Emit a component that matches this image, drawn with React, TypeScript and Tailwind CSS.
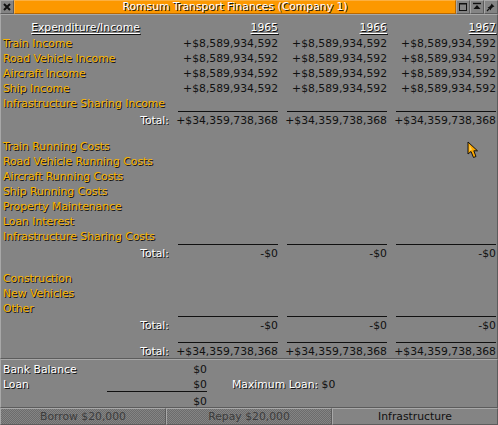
import React from 'react';

const COLS = 'grid grid-cols-[167px_100px_100px_100px] gap-x-[9px]';
const LABEL = 'text-[#f8b400] [text-shadow:1px_1px_0_#101010]';
const WHITE = 'text-white [text-shadow:1px_1px_0_#101010]';
const NUM = 'flex justify-end text-[#101010]';
const BEVEL = 'border border-t-[#a8a8a8] border-l-[#a8a8a8] border-r-[#5c5c5c] border-b-[#5c5c5c]';

const BIG = '+$8,589,934,592';
const SUM = '+$34,359,738,368';

interface IRowProps {
  label?: string;
  values?: string[];
  total?: boolean;
  className?: string;
}

const Row: React.FC<IRowProps> = ({ label = '', values, total = false, className = 'h-[15px]' }) => (
  <div className={`${COLS} leading-[15px] whitespace-nowrap ${className}`}>
    {total ? <span className={`text-right ${WHITE}`}>Total:</span> : <span className={`pl-px ${LABEL}`}>{label}</span>}
    {[0, 1, 2].map((i) => (
      <span key={i} className={NUM}>
        {values ? values[i] : ''}
      </span>
    ))}
  </div>
);

const Rule: React.FC = () => (
  <div className={`${COLS} h-[2px]`}>
    <div />
    <div className="h-px bg-[#101010]" />
    <div className="h-px bg-[#101010]" />
    <div className="h-px bg-[#101010]" />
  </div>
);

const TitleButton: React.FC<{ children: React.ReactNode }> = ({ children }) => (
  <div className={`w-[14px] h-[14px] flex items-center justify-center ${BEVEL}`}>{children}</div>
);

const Cursor: React.FC = () => (
  <svg className="absolute left-[467px] top-[141px]" width="14" height="19" viewBox="0 0 14 19">
    <polygon
      points="1,1 1,13 4,10.5 6.5,16.5 9,15.5 6.8,9.8 10.5,9.8"
      fill="#fca800"
      stroke="#101010"
      strokeWidth="1"
      strokeLinejoin="miter"
    />
    <polygon points="2.5,4 2.5,10 5,8.5" fill="#fcd060" />
  </svg>
);

const DISABLED =
  'w-[166px] text-center text-[#3c3c3c] bg-[repeating-conic-gradient(#6c6c6c_0%_25%,#848484_0%_50%)] bg-[length:2px_2px]';

const App: React.FC = () => {
  const incomes = ['Train Income', 'Road Vehicle Income', 'Aircraft Income', 'Ship Income'];
  const costs = [
    'Train Running Costs',
    'Road Vehicle Running Costs',
    'Aircraft Running Costs',
    'Ship Running Costs',
    'Property Maintenance',
    'Loan Interest',
    'Infrastructure Sharing Costs',
  ];
  const zero = ['-$0', '-$0', '-$0'];

  return (
    <div className="relative w-[498px] h-[425px] overflow-hidden bg-[#848484] font-['DejaVu_Sans',sans-serif] text-[10.8px] select-none">
      {/* title bar */}
      <div className="flex h-[14px]">
        <TitleButton>
          <svg width="8" height="8" viewBox="0 0 8 8">
            <path d="M1 1L7 7M7 1L1 7" stroke="#101010" strokeWidth="2" />
          </svg>
        </TitleButton>
        <div className="flex-1 h-[14px] bg-[#fc9800] border border-t-[#fcb040] border-l-[#fcb040] border-r-[#b86800] border-b-[#b86800] flex items-center justify-center">
          <span className={`leading-[12px] ${WHITE}`}>Romsum Transport Finances (Company 1)</span>
        </div>
        <TitleButton>
          <svg width="10" height="10" viewBox="0 0 10 10">
            <rect x="1.5" y="1.5" width="7" height="7" fill="none" stroke="#101010" strokeWidth="1" />
            <path d="M1 2H9" stroke="#101010" strokeWidth="1" />
          </svg>
        </TitleButton>
        <TitleButton>
          <svg width="10" height="10" viewBox="0 0 10 10">
            <path d="M1 1.5H9" stroke="#101010" strokeWidth="1.4" />
            <path d="M5 3L8.5 7H1.5Z" fill="#101010" />
          </svg>
        </TitleButton>
        <TitleButton>
          <svg width="10" height="10" viewBox="0 0 10 10">
            <path d="M5.5 1.5L8.5 4.5L7 5L5 7L5 8.5L1.5 5L3 5L5 3Z" fill="#101010" />
            <path d="M3.3 6.7L1 9" stroke="#101010" strokeWidth="1.2" />
          </svg>
        </TitleButton>
      </div>

      {/* main table */}
      <div className={`h-[345px] pl-[1px] pt-[5px] ${BEVEL}`}>
        <div className={`${COLS} h-[16px] leading-[15px] whitespace-nowrap`}>
          <span className={`text-center underline underline-offset-[2px] ${WHITE}`}>Expenditure/Income</span>
          {['1965', '1966', '1967'].map((y) => (
            <span key={y} className="flex justify-end">
              <span className={`underline underline-offset-[2px] ${WHITE}`}>{y}</span>
            </span>
          ))}
        </div>

        {incomes.map((l) => (
          <Row key={l} label={l} values={[BIG, BIG, BIG]} />
        ))}
        <Row label="Infrastructure Sharing Income" />
        <Rule />
        <Row total values={[SUM, SUM, SUM]} />

        <div className="h-[11px]" />
        {costs.map((l) => (
          <Row key={l} label={l} />
        ))}
        <Rule />
        <Row total values={zero} />

        <div className="h-[10px]" />
        <Row label="Construction" />
        <Row label="New Vehicles" />
        <Row label="Other" />
        <Rule />
        <Row total values={zero} />

        <div className="h-[9px]" />
        <Rule />
        <Row total values={[SUM, SUM, SUM]} className="h-[14px]" />
      </div>

      {/* bank balance */}
      <div className={`h-[49px] pl-[1px] pt-[2px] leading-[15px] whitespace-nowrap ${BEVEL}`}>
        <div className="flex h-[15px]">
          <div className="w-[205px] flex justify-between pl-px">
            <span className={WHITE}>Bank Balance</span>
            <span className="text-[#101010]">$0</span>
          </div>
        </div>
        <div className="flex h-[14px]">
          <div className="w-[205px] flex justify-between pl-px">
            <span className={WHITE}>Loan</span>
            <span className="text-[#101010]">$0</span>
          </div>
          <div className="ml-[25px]">
            <span className={WHITE}>Maximum Loan:</span>
            <span className="text-[#101010]"> $0</span>
          </div>
        </div>
        <div className="ml-[105px] w-[100px] h-px bg-[#101010]" />
        <div className="h-[2px]" />
        <div className="w-[205px] h-[13px] text-right text-[#101010]">$0</div>
      </div>

      {/* buttons */}
      <div className="flex h-[17px] leading-[15px] whitespace-nowrap">
        <div className={`${DISABLED} ${BEVEL}`}>Borrow $20,000</div>
        <div className={`${DISABLED} ${BEVEL}`}>Repay $20,000</div>
        <div className={`w-[166px] text-center text-[#101010] ${BEVEL}`}>Infrastructure</div>
      </div>

      <Cursor />
    </div>
  );
};

export default App;
